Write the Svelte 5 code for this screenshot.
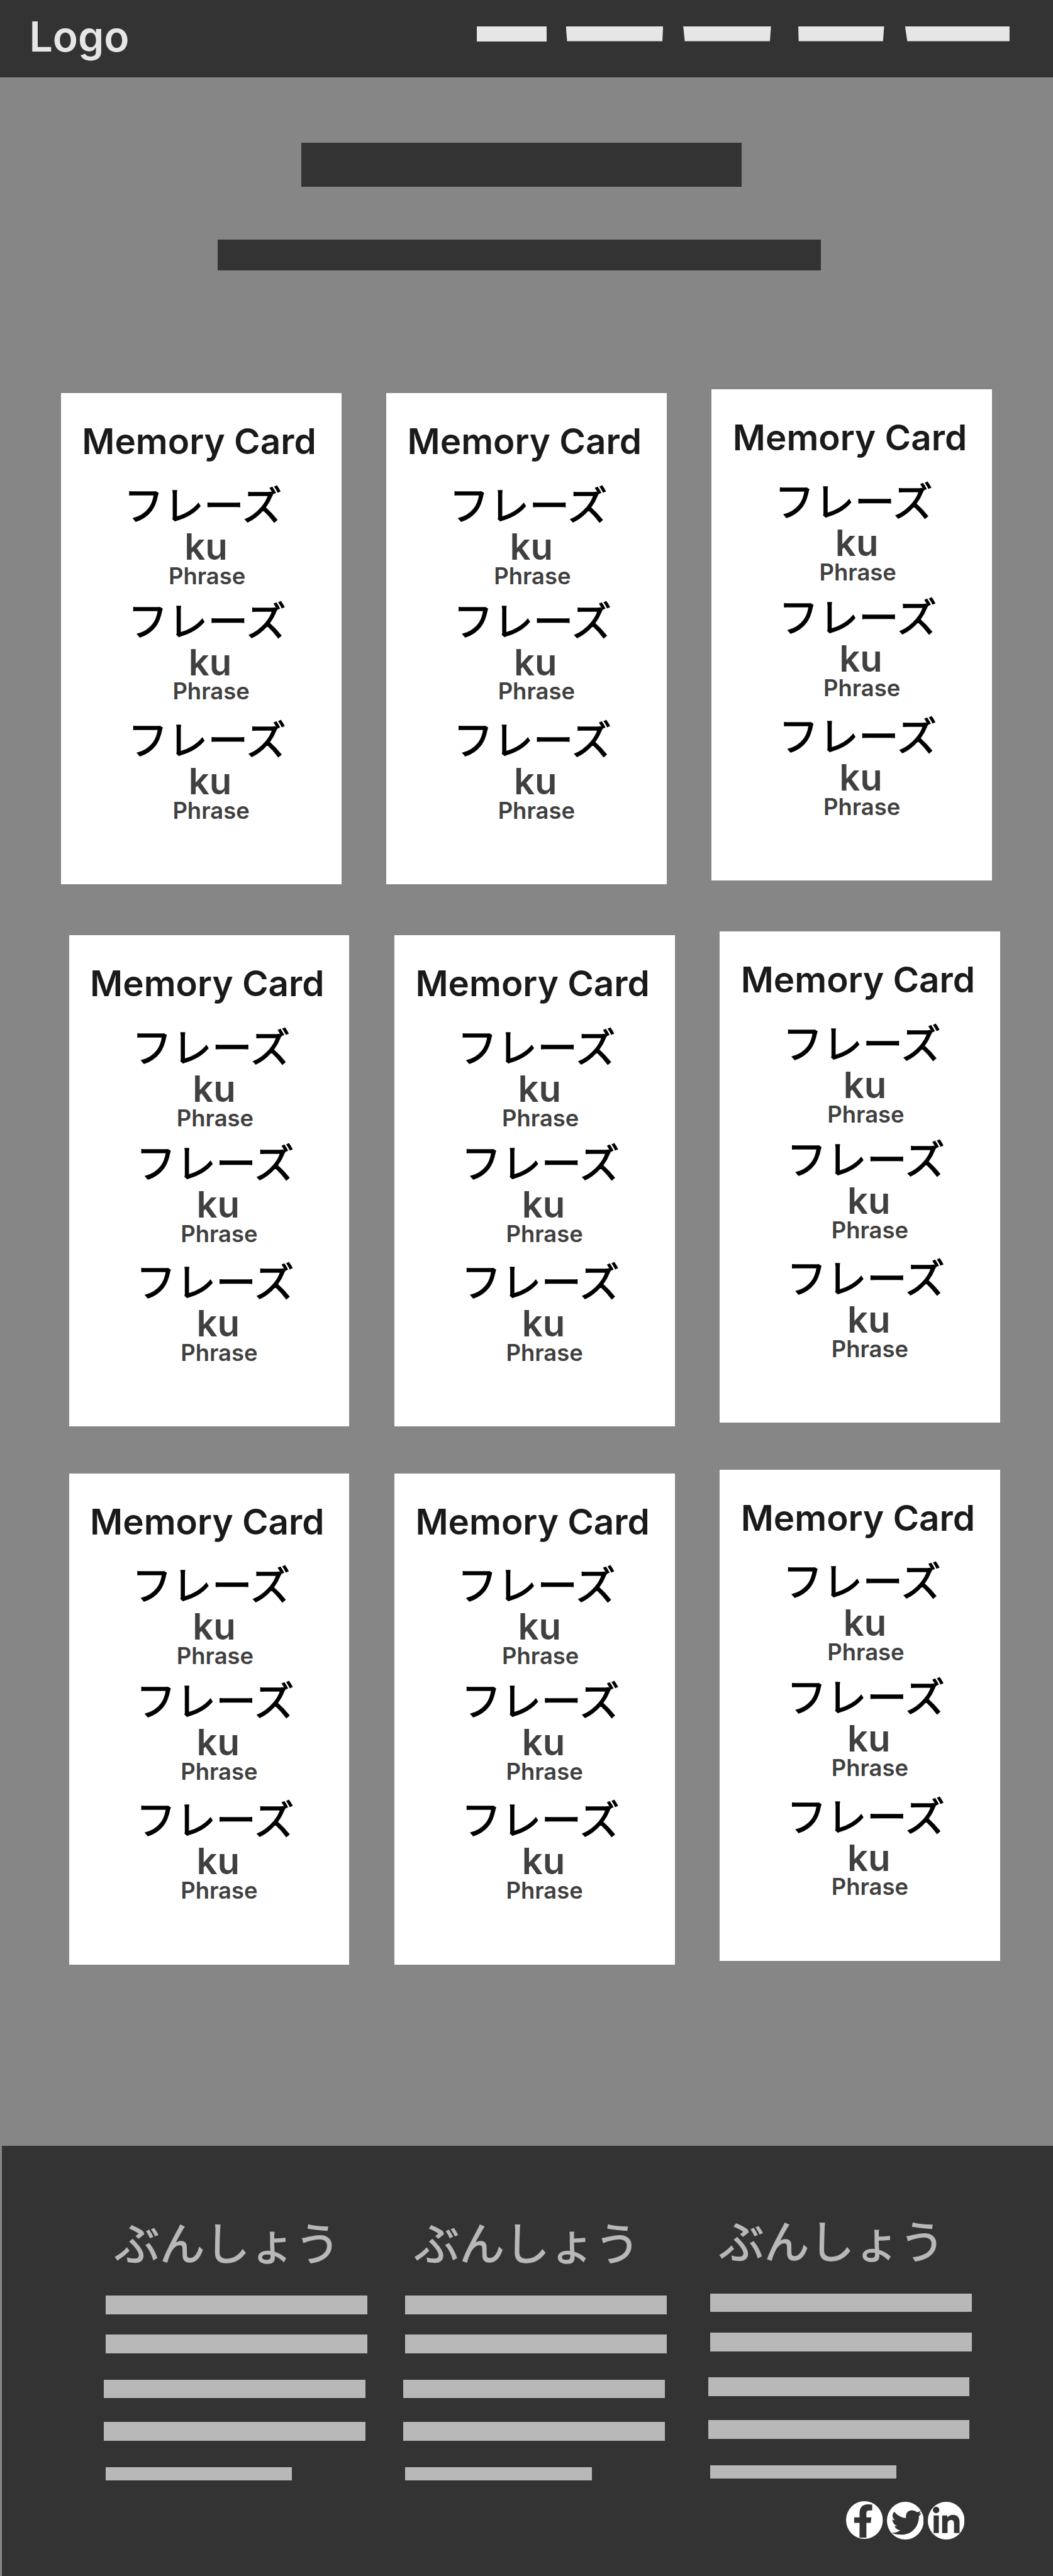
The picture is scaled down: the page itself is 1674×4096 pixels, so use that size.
<script>
  const navItems = ['first', 'second', 'third', 'fourth', 'fifth'];
  const phrases = ['one', 'two', 'three'];
  const cardRows = ['top', 'middle', 'bottom'];
  const columns = ['left', 'center', 'right'];
</script>

<div class="page">
  <header>
    <div class="logo">Logo</div>
    <nav>
      {#each navItems as item}
        <span class="nav-item {item}"></span>
      {/each}
    </nav>
  </header>

  <section class="hero">
    <div class="headline"></div>
    <div class="subline"></div>
  </section>

  <main>
    {#each cardRows as row}
      <div class="card-row {row}">
        {#each columns as column}
          <article class="card {column}">
            <h2>Memory Card</h2>
            {#each phrases as phrase}
              <div class="phrase {phrase}">
                <p class="kana" lang="ja">フレーズ</p>
                <p class="reading">ku</p>
                <p class="meaning">Phrase</p>
              </div>
            {/each}
          </article>
        {/each}
      </div>
    {/each}
  </main>

  <footer>
    <div class="footer-columns">
      {#each columns as column}
        <div class="footer-column {column}">
          <h3 lang="ja">ぶんしょう</h3>
          <div class="line a"></div>
          <div class="line b"></div>
          <div class="line c"></div>
          <div class="line d"></div>
          <div class="line e"></div>
        </div>
      {/each}
    </div>
    <div class="social">
      <svg class="facebook" viewBox="0 0 177 182" preserveAspectRatio="none" role="img" aria-label="Facebook">
        <ellipse cx="88.5" cy="91" rx="88.5" ry="91" fill="#fff" />
        <path fill="#333" d="M65 176V105H39V78H65V58C65 30 80 15 106 15Q118 15 126 17V45H113C102 45 98 50 98 60V78H122L119 105H98V176Z" />
      </svg>
      <svg class="twitter" viewBox="0 0 177 182" preserveAspectRatio="none" role="img" aria-label="Twitter">
        <ellipse cx="88.5" cy="91" rx="88.5" ry="91" fill="#fff" />
        <path fill="#333" d="M35 48C50 66 70 77 92 79C88 52 105 40 122 41Q136 42 146 50Q156 48 163 43Q161 52 154 57Q161 57 167 54Q161 63 154 69C155 115 125 158 72 159Q42 160 21 149Q46 151 64 138C50 136 40 128 37 117Q43 118 49 116C35 112 27 100 26 85Q33 89 39 89C24 78 24 62 35 48Z" />
      </svg>
      <svg class="linkedin" viewBox="0 0 177 182" preserveAspectRatio="none" role="img" aria-label="LinkedIn">
        <ellipse cx="88.5" cy="91" rx="88.5" ry="91" fill="#fff" />
        <circle cx="40" cy="40" r="15.5" fill="#333" />
        <path fill="#333" d="M28 66H53V151H28ZM69 151V66H94V77Q103 63 121 63C145 63 153 78 153 101V151H126V106C126 94 122 88 112 88C101 88 95 95 95 106V151Z" />
      </svg>
    </div>
  </footer>
</div>

<style>
  :global(html) {
    font-size: 9.87px;
  }
  :global(body) {
    margin: 0;
    background: #868686;
  }
  .page {
    box-sizing: border-box;
    width: 100%;
    height: 4096px;
    overflow: hidden;
    display: flex;
    flex-direction: column;
    background: #868686;
    font-family: Inter, 'Liberation Sans', sans-serif;
  }
  h2,
  h3,
  p {
    margin: 0;
    line-height: 1;
    white-space: nowrap;
  }

  header {
    box-sizing: border-box;
    height: 12.5rem;
    flex: none;
    display: flex;
    justify-content: space-between;
    align-items: flex-start;
    padding: 2.5rem 7rem 0 4.7rem;
    background: #333;
  }
  .logo {
    font-size: 6.7rem;
    line-height: 1;
    font-weight: 600;
    color: #e6e6e6;
  }
  nav {
    display: flex;
    padding-top: 1.74rem;
  }
  .nav-item {
    height: 2.4rem;
    background: #e6e6e6;
  }
  .first {
    width: 11.22rem;
  }
  .second {
    width: 15.67rem;
    margin-left: 3.11rem;
    clip-path: polygon(0 0, 100% 0, 99.2% 100%, 1.3% 100%);
  }
  .third {
    width: 14.14rem;
    margin-left: 3.24rem;
    clip-path: polygon(0 0, 100% 0, 98.7% 100%, 1.7% 100%);
  }
  .fourth {
    width: 13.83rem;
    margin-left: 4.39rem;
    clip-path: polygon(0 0, 100% 0, 98.7% 100%, 0.4% 100%);
  }
  .fifth {
    width: 16.83rem;
    margin-left: 3.37rem;
    clip-path: polygon(0 0, 100% 0, 100% 100%, 2.1% 100%);
  }

  .hero {
    flex: none;
    padding-top: 10.52rem;
  }
  .headline {
    width: 70.9rem;
    height: 7.08rem;
    margin-left: 48.57rem;
    background: #333;
  }
  .subline {
    width: 97.16rem;
    height: 4.95rem;
    margin: 8.5rem 0 0 35.07rem;
    background: #333;
  }

  main {
    flex: none;
    display: flex;
    flex-direction: column;
    padding-top: 19.8rem;
  }
  .card-row {
    display: flex;
    gap: 7.25rem;
    padding-left: 11.12rem;
  }
  .card-row.top {
    padding-left: 9.82rem;
  }
  .card-row.middle {
    margin-top: 8.22rem;
  }
  .card-row.bottom {
    margin-top: 7.52rem;
  }
  .card {
    box-sizing: border-box;
    flex: none;
    width: 45.16rem;
    height: 79.13rem;
    padding-top: 4.97rem;
    background: #fff;
  }
  .card.right {
    margin-top: -0.6rem;
    margin-bottom: 0.6rem;
  }
  h2 {
    padding-left: 3.38rem;
    margin-bottom: 3.76rem;
    font-size: 5.73rem;
    font-weight: 600;
    color: #1a1a1a;
  }
  .phrase.two {
    margin: 1.76rem 0 0 0.65rem;
  }
  .phrase.three {
    margin: 2.35rem 0 0 0.65rem;
  }
  .kana {
    padding-left: 10.12rem;
    font-family: 'Noto Sans CJK JP', sans-serif;
    font-size: 6.45rem;
    font-weight: 400;
    color: #000;
    -webkit-text-stroke: 0.14rem #000;
  }
  .reading {
    padding-left: 19.9rem;
    margin-top: 0.85rem;
    font-size: 5.88rem;
    font-weight: 600;
    color: #404040;
  }
  .meaning {
    padding-left: 17.33rem;
    margin-top: -0.02rem;
    font-size: 3.69rem;
    font-weight: 600;
    color: #404040;
  }

  footer {
    box-sizing: border-box;
    flex: 1;
    margin: 29.27rem 0 0 0.3rem;
    padding: 11.72rem 0 0 16.4rem;
    background: #333;
  }
  .footer-columns {
    display: grid;
    grid-template-columns: 48.27rem 49.09rem 42.43rem;
  }
  .footer-column.right {
    margin-top: -0.33rem;
    margin-bottom: 0.33rem;
  }
  h3 {
    padding-left: 1.75rem;
    font-family: 'Noto Sans CJK JP', sans-serif;
    font-size: 7.27rem;
    font-weight: 400;
    color: #b8b8b8;
    -webkit-text-stroke: 0.14rem #b8b8b8;
  }
  .line {
    width: 42.12rem;
    height: 2.99rem;
    background: #b8b8b8;
  }
  .a {
    margin: 5.1rem 0 0 0.32rem;
  }
  .b {
    margin: 3.31rem 0 0 0.32rem;
  }
  .c {
    margin-top: 4.22rem;
  }
  .d {
    margin-top: 3.88rem;
  }
  .e {
    width: 30.03rem;
    height: 2.13rem;
    margin: 4.3rem 0 0 0.32rem;
  }
  .social {
    display: flex;
    align-items: flex-start;
    padding: 3.33rem 0 0 119.6rem;
  }
  .social svg {
    flex: none;
    width: 5.92rem;
    height: 6.07rem;
  }
  .twitter {
    margin: 0.08rem 0 0 0.6rem;
  }
  .linkedin {
    margin: 0.12rem 0 0 0.68rem;
  }
</style>
